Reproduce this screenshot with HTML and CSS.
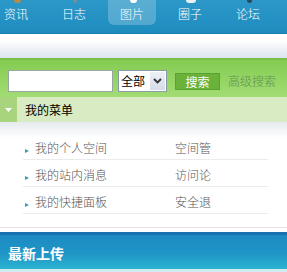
FILE: index.html
```html
<!DOCTYPE html>
<html lang="zh">
<head>
<meta charset="utf-8">
<link rel="stylesheet" href="styles.css">
</head>
<body>
<div class="nav">
  <div class="nav-list">
    <a class="nav-item"><span class="ico ico-news"></span><span class="lbl">资讯</span></a>
    <a class="nav-item"><span class="ico ico-blog"></span><span class="lbl">日志</span></a>
    <a class="nav-item active"><span class="ico ico-pic"></span><span class="lbl">图片</span></a>
    <a class="nav-item"><span class="ico ico-circle"></span><span class="lbl">圈子</span></a>
    <a class="nav-item"><span class="ico ico-bbs"></span><span class="lbl">论坛</span></a>
  </div>
</div>
<div class="band"></div>
<div class="search">
  <div class="input"></div>
  <div class="select"><span class="sel-text">全部</span><span class="sel-arrow"><svg width="9" height="6" viewBox="0 0 9 6"><path d="M1 1 L4.5 4.5 L8 1" fill="none" stroke="#333" stroke-width="1.8"/></svg></span></div>
  <div class="btn">搜索</div>
  <a class="adv">高级搜索</a>
</div>
<div class="menu-head">
  <span class="toggle"><svg width="7" height="4" viewBox="0 0 7 4"><path d="M0 0 H7 L3.5 4 Z" fill="#fff"/></svg></span>
  <span class="menu-title">我的菜单</span>
</div>
<div class="menu-body">
  <ul class="menu-list">
    <li class="row"><span class="col1"><i class="bullet"></i>我的个人空间</span><span class="col2">空间管</span></li>
    <li class="row"><span class="col1"><i class="bullet"></i>我的站内消息</span><span class="col2">访问论</span></li>
    <li class="row"><span class="col1"><i class="bullet"></i>我的快捷面板</span><span class="col2">安全退</span></li>
  </ul>
</div>
<div class="spacer"></div>
<div class="section-head"><span class="section-title">最新上传</span></div>
<div class="section-foot"></div>
</body>
</html>
```

FILE: styles.css
```css
html, body {
  margin: 0;
  padding: 0;
  background: #fff;
  width: 287px;
  overflow: hidden;
  font-family: "Noto Sans CJK SC", "Noto Sans", sans-serif;
  font-size: 12px;
}

.nav {
  height: 33px;
  background: linear-gradient(#2c98c8, #2290c2 70%, #1f8bbd);
  border-bottom: 1px solid #1a7db0;
  overflow: hidden;
}
.nav-list {
  display: flex;
  gap: 10px;
  margin-left: -8px;
}
.nav-item {
  width: 48px;
  height: 25px;
  display: flex;
  flex-direction: column;
  align-items: center;
  color: #fff;
  border-radius: 0 0 6px 6px;
}
.nav-item.active {
  background: rgba(255, 255, 255, 0.22);
}
.ico {
  display: block;
  width: 7px;
  height: 3px;
  border-radius: 0 0 3px 3px;
  margin-left: 2px;
}
.ico-news { background: #b88a4a; }
.ico-blog { background: #6f8ea0; width: 4px; }
.ico-pic { background: #fff; }
.ico-circle { background: #e8f2f6; width: 10px; }
.ico-bbs { background: #2c4a5e; width: 5px; }
.lbl {
  display: block;
  line-height: 14px;
  margin-top: 4px;
  font-weight: 300;
}

.band {
  height: 24px;
  background: linear-gradient(#fff 25%, #dde4ee);
}

.search {
  display: flex;
  align-items: center;
  border-top: 2px solid #78c048;
  background: linear-gradient(#84cc52, #a2dc74);
  padding: 10px 0 5px 8px;
}
.input {
  width: 103px;
  height: 20px;
  background: #fff;
  border: 1px solid #9aa6a0;
}
.select {
  margin-left: 5px;
  width: 47px;
  height: 20px;
  background: #fff;
  border: 1px solid #8a9aa8;
  display: flex;
  align-items: center;
  justify-content: space-between;
}
.sel-text {
  padding-left: 2px;
  line-height: 14px;
  color: #000;
}
.sel-arrow {
  width: 15px;
  height: 18px;
  margin-right: 1px;
  background: linear-gradient(#eef1f7, #d4dbe8);
  display: flex;
  align-items: center;
  justify-content: center;
}
.btn {
  margin-left: 8px;
  width: 43px;
  height: 15px;
  line-height: 15px;
  text-align: center;
  color: #fff;
  background: #6ab23a;
  border: 1px solid #5ca232;
}
.adv {
  margin-left: 8px;
  color: #5f9450;
  line-height: 14px;
  font-weight: 300;
}

.menu-head {
  display: flex;
  align-items: center;
  height: 25px;
  background: #d9ebc3;
}
.toggle {
  width: 17px;
  height: 25px;
  background: #a7d47c;
  display: flex;
  align-items: center;
  justify-content: center;
}
.menu-title {
  margin-left: 8px;
  color: #000;
  line-height: 14px;
}

.menu-body {
  background: linear-gradient(#e6eaee, #fff 16px);
  padding-top: 11px;
}
.menu-list {
  list-style: none;
  margin: 0 19px 0 23px;
  padding: 0;
}
.row {
  display: flex;
  height: 14px;
  line-height: 14px;
  padding: 8px 0 4px;
  border-bottom: 1px solid #ebebeb;
  color: #555;
  font-weight: 300;
}
.col1 {
  width: 152px;
  display: flex;
  align-items: center;
}
.bullet {
  display: block;
  width: 0;
  height: 0;
  border-left: 4px solid #3a9ab2;
  border-top: 2.5px solid transparent;
  border-bottom: 2.5px solid transparent;
  margin: 6px 6px 0 2px;
}
.col2 {
  color: #555;
}

.spacer {
  height: 13px;
  border-bottom: 1px solid #f4dede;
  margin-bottom: 4px;
}
.section-head {
  height: 34px;
  border-top: 3px solid #1b70ae;
  background: linear-gradient(#1d8bc3, #1f95c6 55%, #2bb3d1);
  display: flex;
  align-items: center;
  padding-left: 8px;
}
.section-title {
  color: #fff;
  font-size: 14px;
  font-weight: bold;
  line-height: 16px;
  margin-top: 2px;
}
.section-foot {
  height: 3px;
  background: #d2ebf3;
}
```
